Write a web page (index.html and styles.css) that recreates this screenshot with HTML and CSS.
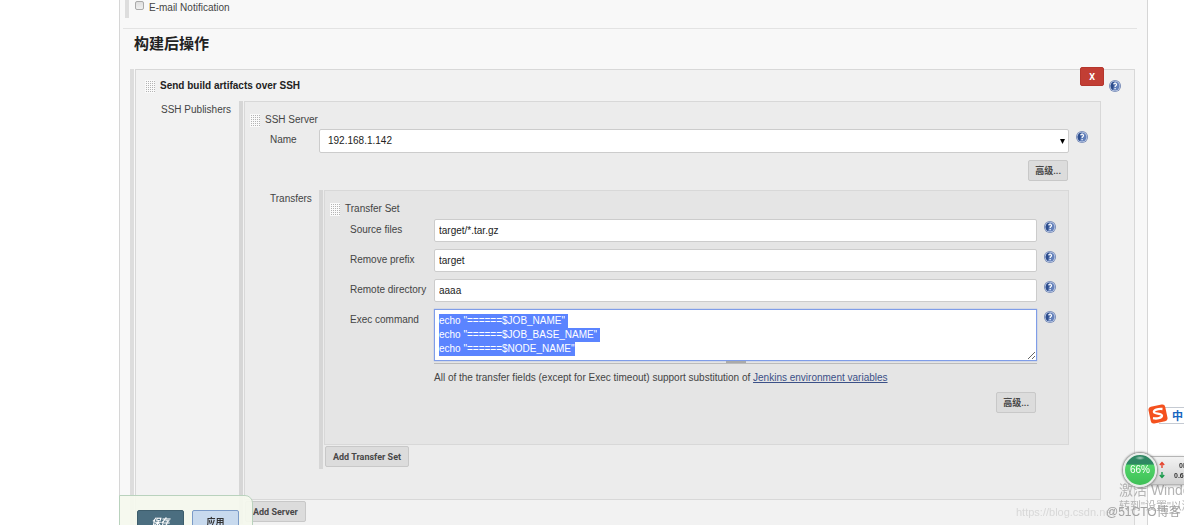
FILE: index.html
```
<!DOCTYPE html>
<html lang="zh-CN">
<head>
<meta charset="utf-8">
<title>构建后操作</title>
<link rel="stylesheet" href="styles.css">
</head>
<body>
<svg class="defs" aria-hidden="true">
  <symbol id="help" viewBox="0 0 12 12">
    <circle cx="6" cy="6" r="6" fill="#7488b5"/>
    <circle cx="6" cy="6" r="5.2" fill="#c9d4ea"/>
    <circle cx="6" cy="6" r="4.5" fill="#6380ba"/>
    <path d="M5.6 1.6A4.5 4.5 0 0 0 4 10z" fill="#2c4c8c"/>
    <path d="M4.6 4.3C4.8 2.8 7.6 2.8 7.5 4.6 7.4 5.6 6.2 5.7 6.1 7M6.1 8.1V9.2" fill="none" stroke="#fff" stroke-width="1.2"/>
  </symbol>
</svg>
<main class="page">
  <div class="option">
    <input type="checkbox" id="mail"><label for="mail">E-mail Notification</label>
  </div>
  <h1 class="heading">构建后操作</h1>

  <form class="chunk chunk-outer">
    <section class="panel panel-step">
      <button type="button" class="remove">X</button>
      <header class="title">
        <i class="grip"></i><b>Send build artifacts over SSH</b>
        <a href="#" class="help title-help" aria-label="Help"><svg><use href="#help"/></svg></a>
      </header>
      <div class="nested nested-publishers">
        <span class="caption">SSH Publishers</span>
        <div class="chunk">
          <section class="panel panel-server">
            <header class="title"><i class="grip"></i><span>SSH Server</span></header>
            <div class="field field-name">
              <label for="name">Name</label>
              <div class="select">
                <select id="name"><option>192.168.1.142</option></select>
                <svg class="caret" viewBox="0 0 5 5"><path d="M0 0h5L2.500 5z"/></svg>
              </div>
              <a href="#" class="help" aria-label="Help"><svg><use href="#help"/></svg></a>
            </div>
            <div class="advanced"><button type="button" class="btn">高级...</button></div>
            <div class="nested nested-transfers">
              <span class="caption">Transfers</span>
              <div class="chunk">
                <section class="panel panel-transfer">
                  <header class="title"><i class="grip"></i><span>Transfer Set</span></header>
                  <div class="field">
                    <label for="source">Source files</label>
                    <input type="text" id="source" value="target/*.tar.gz">
                    <a href="#" class="help" aria-label="Help"><svg><use href="#help"/></svg></a>
                  </div>
                  <div class="field">
                    <label for="prefix">Remove prefix</label>
                    <input type="text" id="prefix" value="target">
                    <a href="#" class="help" aria-label="Help"><svg><use href="#help"/></svg></a>
                  </div>
                  <div class="field">
                    <label for="remote">Remote directory</label>
                    <input type="text" id="remote" value="aaaa">
                    <a href="#" class="help" aria-label="Help"><svg><use href="#help"/></svg></a>
                  </div>
                  <div class="field">
                    <label for="exec">Exec command</label>
                    <div class="command">
                      <textarea id="exec" spellcheck="false">echo "======$JOB_NAME"
echo "======$JOB_BASE_NAME"
echo "======$NODE_NAME"</textarea>
                      <div class="resizer"></div>
                      <p class="note">All of the transfer fields (except for Exec timeout) support substitution of <a href="#">Jenkins environment variables</a></p>
                    </div>
                    <a href="#" class="help" aria-label="Help"><svg><use href="#help"/></svg></a>
                  </div>
                  <div class="advanced"><button type="button" class="btn">高级...</button></div>
                </section>
                <button type="button" class="btn add">Add Transfer Set</button>
              </div>
            </div>
          </section>
          <button type="button" class="btn add">Add Server</button>
        </div>
      </div>
    </section>
  </form>
</main>

<div class="savebar">
  <button type="button" class="save">保存</button>
  <button type="button" class="apply">应用</button>
</div>

<div class="watermark activate"><span>激活 Windows</span><small>转到"设置"以激活</small></div>
<div class="watermark blog">https://blog.csdn.net</div>
<div class="watermark author">@51CTO博客</div>

<div class="ime">
  <svg viewBox="0 0 20 20"><rect x="1.500" y="1.500" width="17" height="17" rx="3" fill="#f4511e" transform="rotate(-12 10 10)"/><path d="M14.500 5C10 4.600 5.300 5.800 6 8.200c.6 2 8.200.7 8 3.500-.2 2.600-5.500 3.200-9 2.500" fill="none" stroke="#fff" stroke-width="2.300"/></svg>
  <span>中</span>
</div>
<div class="speed">
  <svg class="arrows" viewBox="0 0 6 18"><path d="M3 7V2M.8 4 3 1.500 5.200 4" stroke="#e5432d" fill="none" stroke-width="1.400"/><path d="M3 11v5M.8 14 3 16.500 5.200 14" stroke="#189a4a" fill="none" stroke-width="1.400"/></svg>
  <div class="rates"><span>0K/s</span><span>0.6K/s</span></div>
</div>
<div class="ball">66%</div>
<script src="main.js"></script>
</body>
</html>
```

FILE: main.js
```
const command = document.getElementById('exec');
command.focus({ preventScroll: true });
command.select();
```

FILE: styles.css
```
* { box-sizing: border-box; }
html { height: 100%; }
body {
  height: 100%;
  margin: 0;
  overflow: hidden;
  background: #fff;
  color: #444;
  font: 10px/14px "Liberation Sans", "Noto Sans CJK SC", sans-serif;
}
input, select, textarea { font: inherit; color: #222; }
.defs { position: absolute; width: 0; height: 0; }

.page {
  min-height: 100%;
  margin: 0 36px 0 119px;
  padding: 0 10px 0 3px;
  background: #f8f8f8;
  border: solid #d6d6d6;
  border-width: 0 1px;
}
.option {
  display: flex;
  align-items: flex-start;
  gap: 5px;
  height: 18px;
  margin-left: 2px;
  padding-left: 6px;
  border-left: 4px solid #ddd;
}
.option label { padding-top: 1px; }
.option input {
  appearance: none;
  width: 9px;
  height: 9px;
  margin: 1px 0 0;
  background: linear-gradient(#dedede, #f0f0f0);
  border: 1px solid #aaa;
  border-radius: 2px;
}
.heading {
  margin: 10px 0 0;
  padding: 5px 0 15px 11px;
  border-top: 1px solid #e3e3e3;
  color: #222;
  font: bold 15px/20px "Liberation Sans", "Noto Sans CJK SC", sans-serif;
}

.chunk { flex: 1; min-width: 0; padding-left: 1px; border-left: 4px solid #d6d6d6; }
.chunk-outer { margin: 0 2px 0 7px; border-color: #ddd; }
.panel { border: 1px solid #d8d8d8; }
.panel-step { position: relative; padding: 8px 33px 10px 9px; background: #f2f2f2; }
.panel-server { padding: 10px 31px 30px 5px; background: #ececec; }
.panel-transfer { padding: 10px 31px 31px 5px; background: #e5e5e5; }
.title { display: flex; align-items: center; gap: 5px; height: 16px; }
.title b { color: #222; }
.panel-server > .title { margin-bottom: 1px; }
.panel-transfer > .title { margin-bottom: 2px; }
.title-help { position: absolute; right: 13px; top: 10px; }
.grip {
  width: 10px;
  height: 13px;
  background: linear-gradient(90deg, #fafafa 1px, transparent 1px) 0 0 / 2px 2px,
    linear-gradient(#fafafa 1px, #b4b4b4 1px) 0 0 / 2px 2px;
}
.help { display: block; width: 12px; height: 12px; }
.help svg { display: block; width: 12px; height: 12px; }

.nested { display: flex; align-items: stretch; }
.nested-publishers { margin-top: 7px; padding-left: 16px; }
.nested-publishers > .caption { width: 78px; padding-top: 2px; }
.nested-transfers { padding-left: 20px; }
.nested-transfers > .caption { width: 49px; padding-top: 2px; }

.field {
  display: grid;
  grid-template-columns: 84px minmax(0, 1fr) 19px;
  align-items: start;
  margin: 0 -19px 7px 20px;
}
.field-name { grid-template-columns: 49px minmax(0, 1fr) 19px; }
.field > label { padding-top: 4px; }
.field > .help { margin-top: 2px; justify-self: end; }
.field input {
  width: 100%;
  height: 23px;
  padding: 0 4px;
  background: #fff;
  border: 1px solid #ccc;
  border-radius: 2px;
}
.select { position: relative; }
.select select {
  appearance: none;
  display: block;
  width: 100%;
  height: 24px;
  padding: 0 8px;
  background: #fff;
  border: 1px solid #ccc;
  border-radius: 2px;
}
.caret { position: absolute; right: 4px; top: 10px; width: 5px; height: 5px; }
.command textarea {
  display: block;
  width: 100%;
  height: 52px;
  padding: 4px;
  background: #fff;
  border: 1px solid #7f9de8;
  outline: 0;
  box-shadow: 0 0 1px #7f9de8;
  line-height: 14px;
  resize: vertical;
}
textarea::selection { background: #5b84ff; color: #fff; }
.resizer {
  height: 3px;
  background: linear-gradient(#aaa, #aaa) center / 20px 3px no-repeat;
  border-bottom: 1px solid #bbb;
}
.note { margin: 7px 0 0; }
.note a { color: #3b5087; }
.advanced { display: flex; justify-content: flex-end; padding-right: 1px; }
.panel-server > .advanced { margin-bottom: 9px; }
.btn {
  height: 21px;
  padding: 0 7px;
  background: #dcdcdc;
  border: 1px solid #c8c8c8;
  border-radius: 2px;
  color: #484848;
  font: bold 9px/14px Roboto, "Noto Sans CJK SC", sans-serif;
}
.advanced .btn { padding: 0 6px; }
.add { display: block; margin: 1px 0 2px 1px; }
.remove {
  position: absolute;
  right: 30px;
  top: -3px;
  width: 24px;
  height: 19px;
  padding: 0;
  background: #c23e34;
  border: 1px solid #b5362d;
  border-radius: 2px;
  color: #fff;
  font: bold 9px/14px Roboto, sans-serif;
}

.savebar {
  position: fixed;
  left: 119px;
  bottom: -24px;
  display: flex;
  gap: 8px;
  padding: 14px 13px 14px 17px;
  background: rgba(245, 249, 238, 0.92);
  border: 1px solid #b9d2bd;
  border-radius: 0 8px 0 0;
}
.savebar button {
  width: 47px;
  height: 24px;
  padding: 0;
  border: 1px solid #3d5d6c;
  border-radius: 2px;
  font: bold 9px/14px "Noto Sans CJK SC", sans-serif;
}
.savebar .save { background: #4b6e80; color: #fff; font-style: italic; }
.savebar .apply { background: #c8daee; border-color: #7b9bc8; color: #333; }

.watermark { position: fixed; white-space: nowrap; }
.activate { left: 1119px; top: 482px; color: #b4b4b4; font-size: 14px; line-height: 16px; }
.activate small { display: block; font-size: 11px; }
.blog { left: 1016px; top: 505px; color: #d8d8d8; font-size: 11px; }
.author { left: 1106px; top: 505px; color: #a2a2a2; font-size: 12px; }

.ime {
  position: fixed;
  left: 1159px;
  right: 0;
  top: 407px;
  height: 17px;
  padding-left: 13px;
  background: #fff;
  border: solid #c5cad2;
  border-width: 1px 0;
  color: #1565c0;
  font: bold 11px/15px "Noto Sans CJK SC", sans-serif;
}
.ime svg { position: absolute; left: -11px; top: -4px; width: 20px; height: 20px; }
.speed {
  position: fixed;
  left: 1140px;
  right: 0;
  top: 456px;
  display: flex;
  height: 29px;
  padding: 4px 0 0 19px;
  overflow: hidden;
  background: linear-gradient(#f2f2f2, #d2d2d2);
  border: solid #b5b5b5;
  border-width: 1px 0;
  box-shadow: 0 1px 3px rgba(0, 0, 0, 0.3);
}
.arrows { flex: none; width: 6px; height: 18px; }
.rates {
  display: flex;
  flex-direction: column;
  padding-left: 9px;
  color: #333;
  font: bold 7px/10px "Liberation Sans", sans-serif;
}
.rates span:first-child { padding-left: 5px; }
.ball {
  position: fixed;
  left: 1123px;
  top: 453px;
  width: 34px;
  height: 34px;
  background: radial-gradient(ellipse 5px 2px at 50% 10%, #fff9, transparent), linear-gradient(#2e8763 0 30%, #50d568 34%, #3fc057);
  border: 2px solid #e8eeea;
  border-radius: 50%;
  box-shadow: 0 0 2px 1px #888;
  color: #fff;
  font: 10px/29px "Liberation Sans", sans-serif;
  text-align: center;
}
```
